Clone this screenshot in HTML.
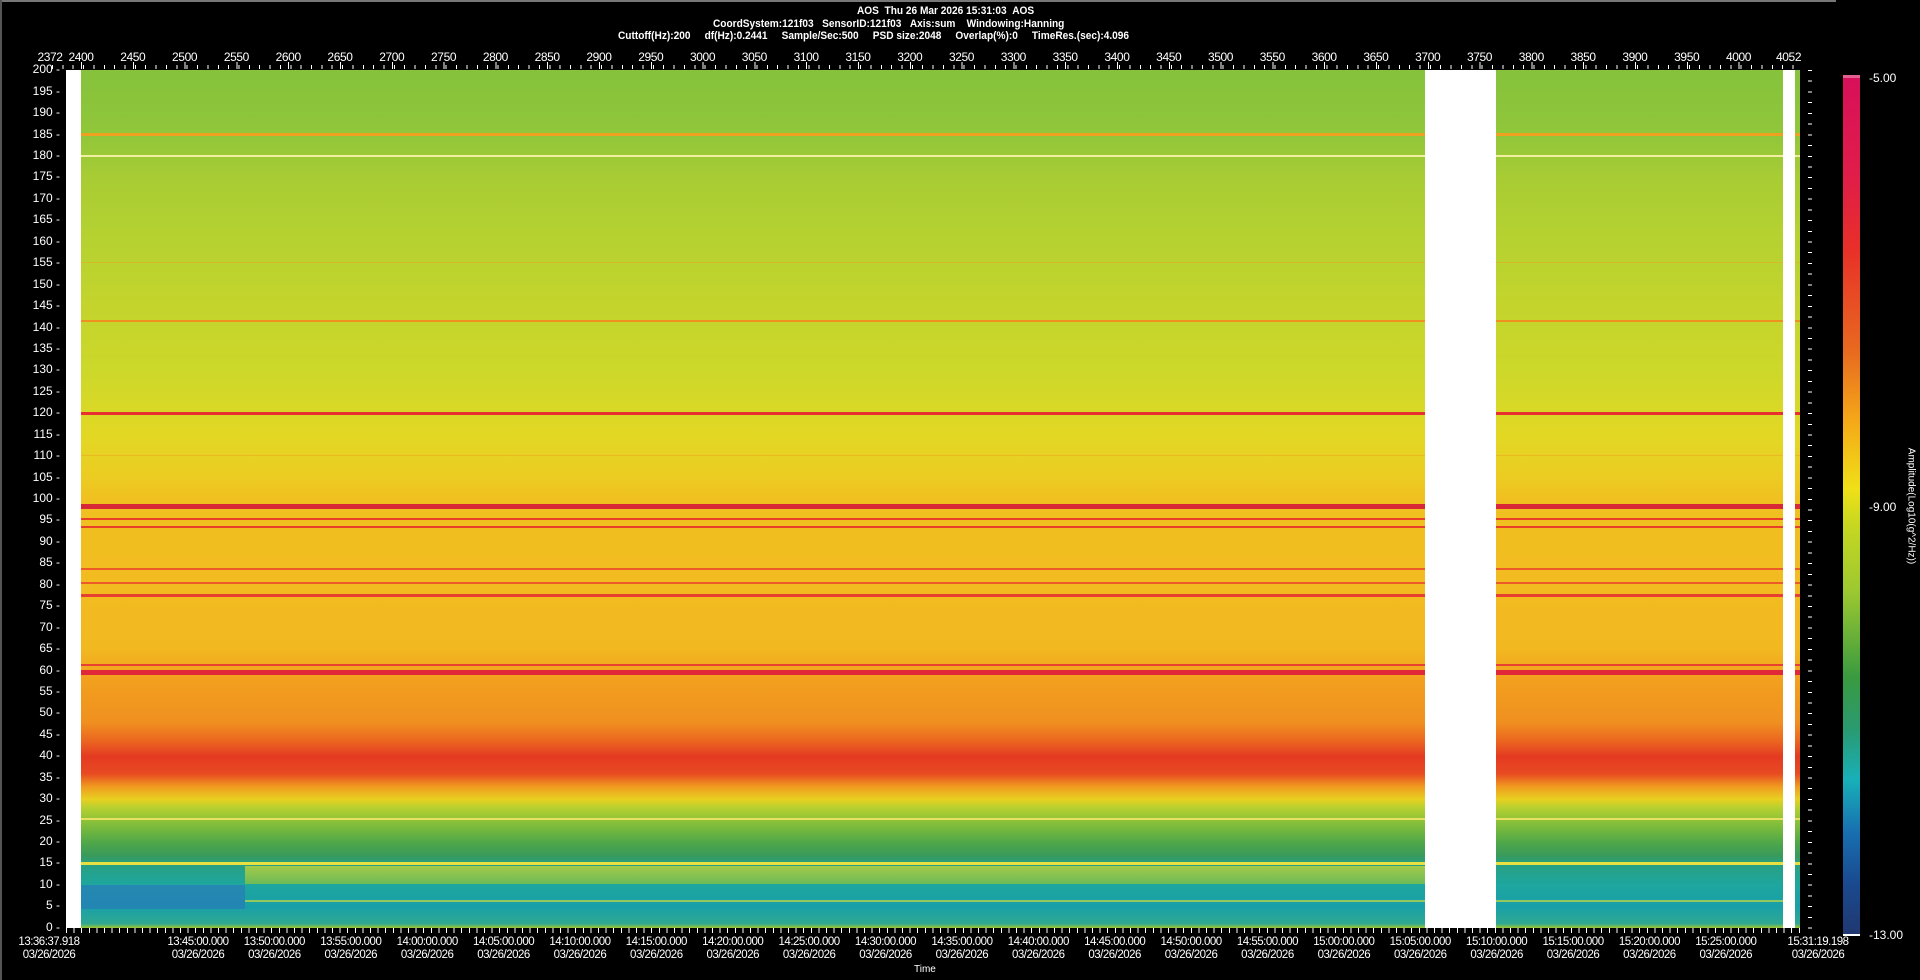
<!DOCTYPE html>
<html><head><meta charset="utf-8"><style>
*{margin:0;padding:0;box-sizing:border-box}
body{width:1920px;height:980px;background:#000;overflow:hidden;position:relative;font-family:"Liberation Sans",sans-serif;color:#fff}
.abs{position:absolute}
.t{font-size:11px;font-weight:bold;white-space:nowrap;position:absolute;transform:scaleX(.92);transform-origin:left}
#spec{left:81px;top:70px;width:1719px;height:858px;background:linear-gradient(to bottom,#86c23c 0%,#90c63a 7.5%,#a8cc34 12.5%,#b6d230 20%,#c4d42c 27.5%,#ccd82a 35%,#e2d824 42.5%,#eccc22 47.5%,#f0c020 50%,#f2bc20 60%,#f2b820 67.5%,#f2a01e 71%,#f09020 76%,#ec6a20 78%,#e43a22 80%,#e84a22 82%,#f09a20 83.5%,#e8d020 85%,#b6d030 86%,#8cc238 87.5%,#50a848 90%,#3a9a5a 91.5%,#28a080 92.5%,#1ea6a0 95%,#18a0a8 97.5%,#30a890 99.5%,#a0c830 100%)}
.l{position:absolute;left:81px;width:1719px}
.ylab{position:absolute;left:0;top:59.3px;width:60px;font-size:12px}
.ylab div{height:21.45px;line-height:21.45px;text-align:right}
.top{position:absolute;left:55.1px;top:50px;display:flex;font-size:12px}
.top div{width:51.8px;text-align:center;letter-spacing:-.4px}
.bot{position:absolute;left:159.8px;top:936px;display:flex;font-size:11.5px;line-height:13px}
.bot div{width:76.4px;text-align:center;letter-spacing:-.5px}
</style></head><body>
<div class="abs" style="left:0;top:0;width:1836px;height:2px;background:#777"></div>
<div class="abs" style="left:0;top:0;width:2px;height:980px;background:#555"></div>

<div class="t" style="left:857px;top:5px">AOS&nbsp;&nbsp;Thu 26 Mar 2026 15:31:03&nbsp;&nbsp;AOS</div>
<div class="t" style="left:713px;top:18px">CoordSystem:121f03&nbsp;&nbsp;&nbsp;SensorID:121f03&nbsp;&nbsp;&nbsp;Axis:sum&nbsp;&nbsp;&nbsp;&nbsp;Windowing:Hanning</div>
<div class="t" style="left:618px;top:30px">Cuttoff(Hz):200&nbsp;&nbsp;&nbsp;&nbsp;&nbsp;df(Hz):0.2441&nbsp;&nbsp;&nbsp;&nbsp;&nbsp;Sample/Sec:500&nbsp;&nbsp;&nbsp;&nbsp;&nbsp;PSD size:2048&nbsp;&nbsp;&nbsp;&nbsp;&nbsp;Overlap(%):0&nbsp;&nbsp;&nbsp;&nbsp;&nbsp;TimeRes.(sec):4.096</div>

<div class="abs" style="left:52px;top:50px;width:40px;font-size:12px;transform:translateX(-50%);text-align:center;margin-left:-2px;letter-spacing:-.4px">2372</div>
<div class="top"><div>2400</div><div>2450</div><div>2500</div><div>2550</div><div>2600</div><div>2650</div><div>2700</div><div>2750</div><div>2800</div><div>2850</div><div>2900</div><div>2950</div><div>3000</div><div>3050</div><div>3100</div><div>3150</div><div>3200</div><div>3250</div><div>3300</div><div>3350</div><div>3400</div><div>3450</div><div>3500</div><div>3550</div><div>3600</div><div>3650</div><div>3700</div><div>3750</div><div>3800</div><div>3850</div><div>3900</div><div>3950</div><div>4000</div></div>
<div class="abs" style="left:1776px;top:50px;font-size:12px;letter-spacing:-.4px">4052</div>
<div class="abs" style="left:52px;top:65px;width:1748px;height:4px;background:repeating-linear-gradient(to right,#fff 0 1px,transparent 1px 10.36px)"></div>
<div class="abs" style="left:81px;top:62px;width:1700px;height:7px;background:repeating-linear-gradient(to right,#fff 0 1px,transparent 1px 51.8px)"></div>

<div class="ylab"><div>200 -</div><div>195 -</div><div>190 -</div><div>185 -</div><div>180 -</div><div>175 -</div><div>170 -</div><div>165 -</div><div>160 -</div><div>155 -</div><div>150 -</div><div>145 -</div><div>140 -</div><div>135 -</div><div>130 -</div><div>125 -</div><div>120 -</div><div>115 -</div><div>110 -</div><div>105 -</div><div>100 -</div><div>95 -</div><div>90 -</div><div>85 -</div><div>80 -</div><div>75 -</div><div>70 -</div><div>65 -</div><div>60 -</div><div>55 -</div><div>50 -</div><div>45 -</div><div>40 -</div><div>35 -</div><div>30 -</div><div>25 -</div><div>20 -</div><div>15 -</div><div>10 -</div><div>5 -</div><div>0 -</div></div>

<div class="abs" style="left:66px;top:70px;width:15px;height:858px;background:#fff"></div>
<div id="spec" class="abs"></div>
<div class="l" style="top:133px;height:3px;background:#f0a020"></div>
<div class="l" style="top:155px;height:2px;background:#f0f0a0"></div>
<div class="l" style="top:262px;height:1px;background:#f0a020;opacity:.5"></div>
<div class="l" style="top:320px;height:2px;background:#f09020"></div>
<div class="l" style="top:412px;height:3px;background:#e83030"></div>
<div class="l" style="top:455px;height:1px;background:#f0a020;opacity:.5"></div>
<div class="l" style="top:504px;height:5px;background:#d82838"></div>
<div class="l" style="top:518px;height:2px;background:#e84028"></div>
<div class="l" style="top:526px;height:2px;background:#e84028"></div>
<div class="l" style="top:568px;height:2px;background:#ec5a28"></div>
<div class="l" style="top:582px;height:2px;background:#ec5a28"></div>
<div class="l" style="top:594px;height:3px;background:#e84030"></div>
<div class="l" style="top:664px;height:2px;background:#e84030"></div>
<div class="l" style="top:670px;height:5px;background:#e02838"></div>
<div class="l" style="top:818px;height:2px;background:#e8e060"></div>
<div class="l" style="top:862px;height:3px;background:#e8e040"></div>
<div class="abs" style="left:245px;top:866px;width:1180px;height:18px;background:linear-gradient(to bottom,#d8dc30,#8ec43a);opacity:.7"></div>
<div class="abs" style="left:245px;top:900px;width:1538px;height:2px;background:#c8d840;opacity:.7"></div>
<div class="abs" style="left:81px;top:885px;width:164px;height:24px;background:#2a78b8;opacity:.65"></div>
<div class="abs" style="left:1783px;top:70px;width:12px;height:858px;background:#fff"></div>
<div class="abs" style="left:1425px;top:70px;width:71px;height:858px;background:#fff"></div>
<div class="abs" style="left:1808px;top:70px;width:4px;height:860px;background:repeating-linear-gradient(to bottom,#fff 0 1px,transparent 1px 10.72px)"></div>

<div class="abs" style="left:66px;top:928px;width:1734px;height:5px;background:repeating-linear-gradient(to right,#fff 0 1px,transparent 1px 7.6px)"></div>
<div class="abs" style="left:13px;top:936px;width:72px;text-align:center;font-size:11.5px;line-height:13px;letter-spacing:-.5px">13:36:37.918<br>03/26/2026</div>
<div class="bot"><div>13:45:00.000<br>03/26/2026</div><div>13:50:00.000<br>03/26/2026</div><div>13:55:00.000<br>03/26/2026</div><div>14:00:00.000<br>03/26/2026</div><div>14:05:00.000<br>03/26/2026</div><div>14:10:00.000<br>03/26/2026</div><div>14:15:00.000<br>03/26/2026</div><div>14:20:00.000<br>03/26/2026</div><div>14:25:00.000<br>03/26/2026</div><div>14:30:00.000<br>03/26/2026</div><div>14:35:00.000<br>03/26/2026</div><div>14:40:00.000<br>03/26/2026</div><div>14:45:00.000<br>03/26/2026</div><div>14:50:00.000<br>03/26/2026</div><div>14:55:00.000<br>03/26/2026</div><div>15:00:00.000<br>03/26/2026</div><div>15:05:00.000<br>03/26/2026</div><div>15:10:00.000<br>03/26/2026</div><div>15:15:00.000<br>03/26/2026</div><div>15:20:00.000<br>03/26/2026</div><div>15:25:00.000<br>03/26/2026</div></div>
<div class="abs" style="left:1782px;top:936px;width:72px;text-align:center;font-size:11.5px;line-height:13px;letter-spacing:-.5px">15:31:19.198<br>03/26/2026</div>
<div class="abs" style="left:914px;top:964px;font-size:10px">Time</div>

<div class="abs" style="left:1843px;top:75px;width:17px;height:3px;background:#e06090"></div>
<div class="abs" style="left:1843px;top:78px;width:17px;height:856px;background:linear-gradient(to bottom,#d8105a 0%,#e01e48 12%,#e83028 20%,#e86a20 32%,#f4a818 40%,#f0e018 48%,#c8d820 52%,#9cc830 60%,#3a9a40 70%,#2a9a70 76%,#18b0b8 82%,#1870b0 88%,#1a4a90 94%,#203870 100%)"></div>
<div class="abs" style="left:1843px;top:934px;width:17px;height:2px;background:#fff"></div>
<div class="abs" style="left:1869px;top:71px;font-size:12px">-5.00</div>
<div class="abs" style="left:1869px;top:500px;font-size:12px">-9.00</div>
<div class="abs" style="left:1869px;top:928px;font-size:12px">-13.00</div>
<div class="abs" style="left:1911px;top:506px;font-size:10px;white-space:nowrap;transform:translate(-50%,-50%) rotate(90deg)">Amplitude(Log10(g^2/Hz))</div>
</body></html>
